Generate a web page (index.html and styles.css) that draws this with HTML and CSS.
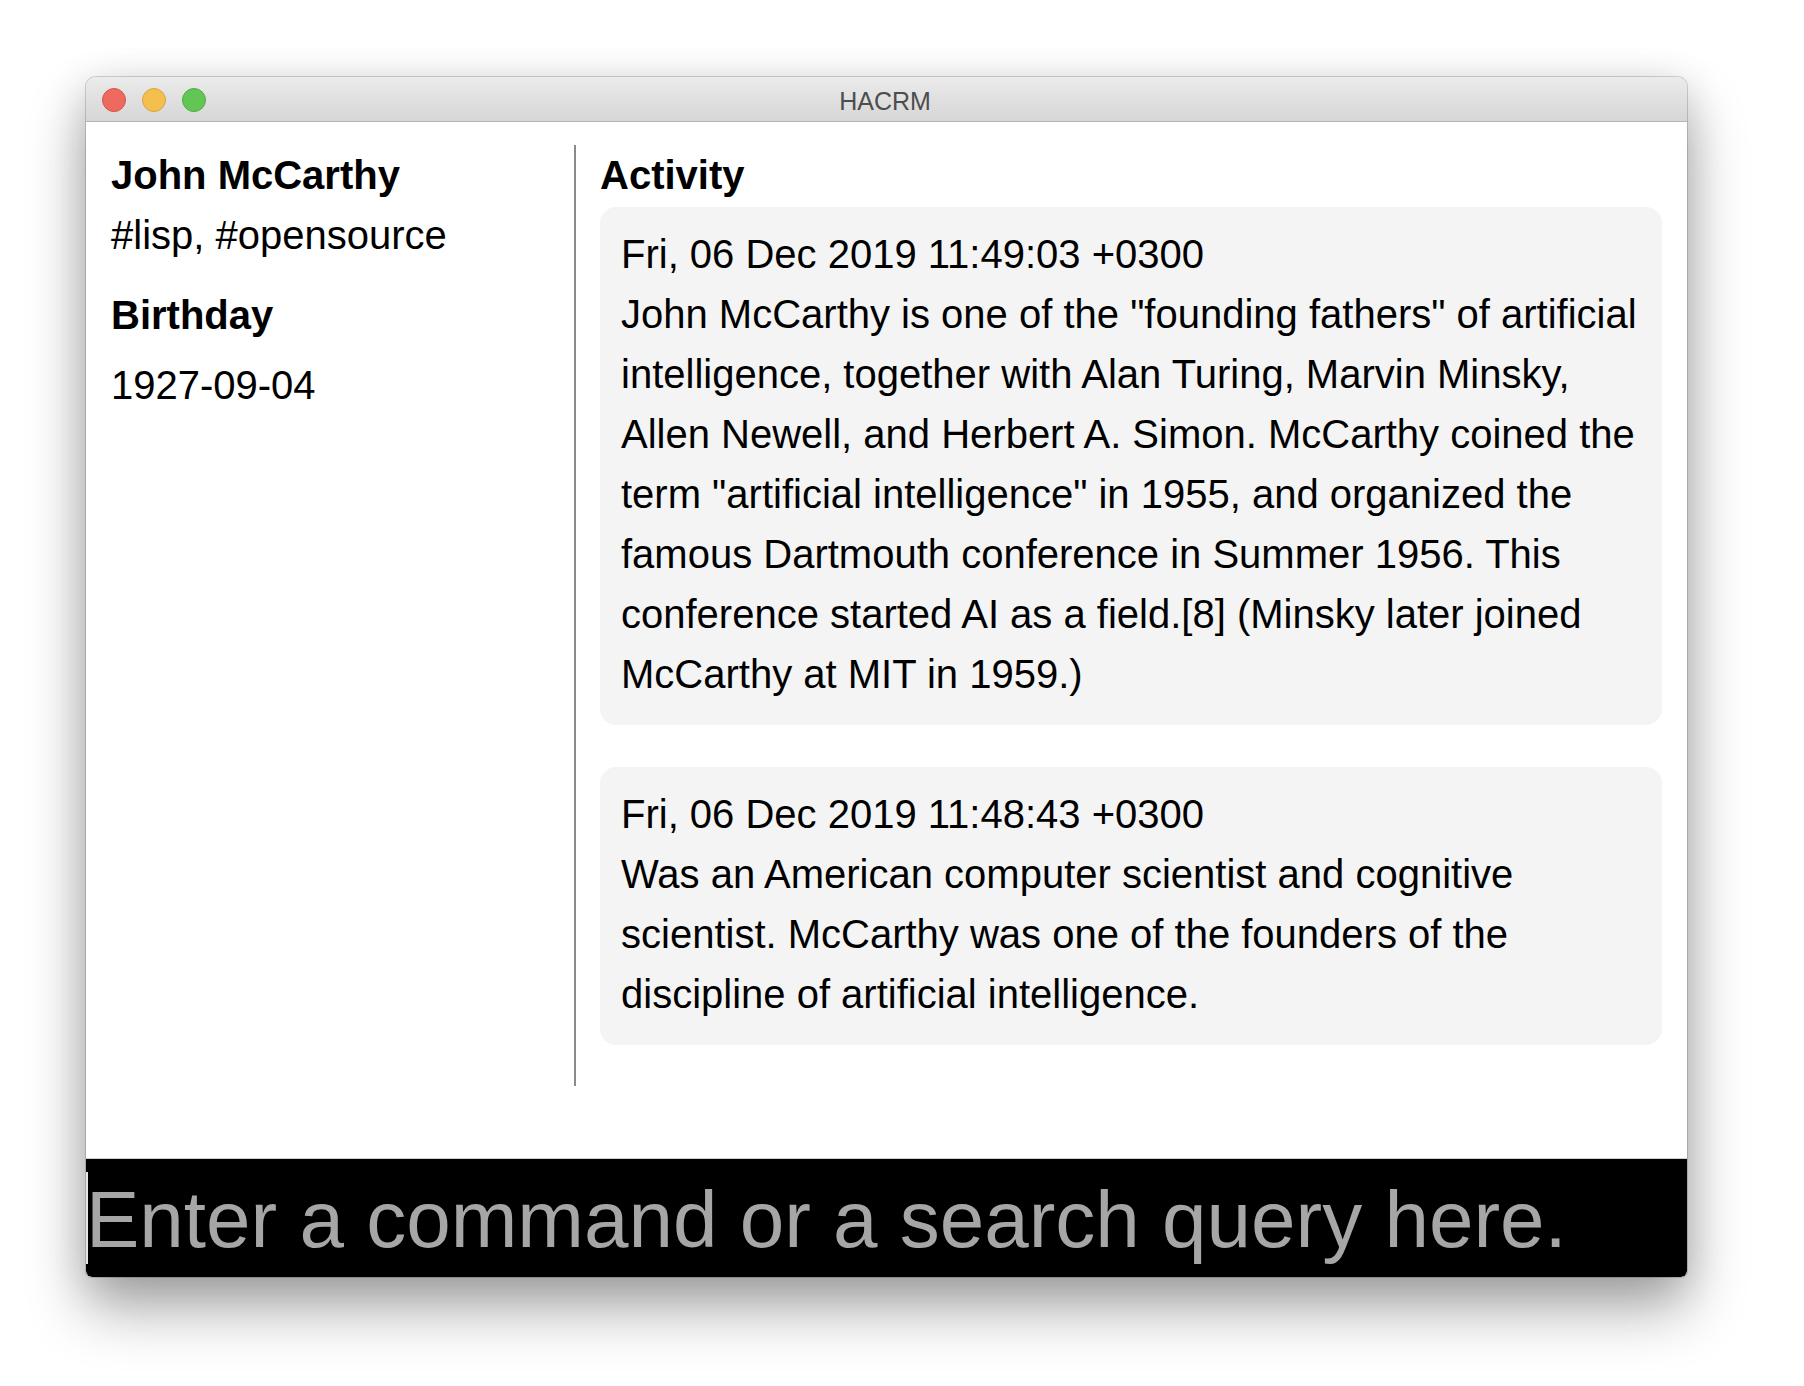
FILE: index.html
```html
<!DOCTYPE html>
<html lang="en">
<head>
<meta charset="utf-8">
<title>HACRM</title>
<link rel="stylesheet" href="styles.css">
</head>
<body>
<div class="window">
  <div class="titlebar">
    <div class="lights">
      <span class="light red"></span>
      <span class="light yellow"></span>
      <span class="light green"></span>
    </div>
    <div class="title">HACRM</div>
    <div class="spacer"></div>
  </div>
  <div class="main">
    <div class="sidebar">
      <h1 class="name">John McCarthy</h1>
      <div class="tags">#lisp, #opensource</div>
      <h3 class="label">Birthday</h3>
      <div class="value">1927-09-04</div>
    </div>
    <div class="activity">
      <h2 class="heading">Activity</h2>
      <div class="card">
        <div class="date">Fri, 06 Dec 2019 11:49:03 +0300</div>
        <div class="text">John McCarthy is one of the "founding fathers" of artificial intelligence, together with Alan Turing, Marvin Minsky, Allen Newell, and Herbert A. Simon. McCarthy coined the term "artificial intelligence" in 1955, and organized the famous Dartmouth conference in Summer 1956. This conference started AI as a field.[8] (Minsky later joined McCarthy at MIT in 1959.)</div>
      </div>
      <div class="card last">
        <div class="date">Fri, 06 Dec 2019 11:48:43 +0300</div>
        <div class="text">Was an American computer scientist and cognitive scientist. McCarthy was one of the founders of the discipline of artificial intelligence.</div>
      </div>
    </div>
  </div>
  <div class="command">
    <span class="caret"></span>
    <span class="placeholder">Enter a command or a search query here.</span>
  </div>
</div>
</body>
</html>
```
FILE: styles.css
```css
html, body {
  margin: 0;
  padding: 0;
  background: #ffffff;
}
body {
  font-family: "Liberation Sans", Arial, Helvetica, sans-serif;
  color: #000;
  padding-top: 77px;
  padding-left: 86px;
  height: 1386px;
  box-sizing: border-box;
  overflow: hidden;
}
.window {
  width: 1601px;
  height: 1200px;
  display: flex;
  flex-direction: column;
  background: #fff;
  border-radius: 10px 10px 6px 6px;
  overflow: hidden;
  box-shadow: 0 0 0 1px rgba(0,0,0,0.16), 0 32px 60px rgba(0,0,0,0.33), 0 8px 40px rgba(0,0,0,0.14);
}
.titlebar {
  height: 44px;
  flex: none;
  display: grid;
  grid-template-columns: 1fr auto 1fr;
  background: linear-gradient(#ebebeb, #d6d6d6);
  border-bottom: 1px solid #b3b3b3;
}
.lights {
  display: flex;
  align-items: center;
  gap: 16px;
  padding-left: 16px;
  padding-top: 2px;
}
.light {
  width: 22px;
  height: 22px;
  border-radius: 50%;
  border: 1px solid;
}
.red { background: #ee6a5f; border-color: #d1564b; }
.yellow { background: #f5bf4f; border-color: #d9a441; }
.green { background: #62c655; border-color: #53aa45; }
.title {
  font-size: 25px;
  line-height: 38px;
  padding-top: 5px;
  padding-right: 3px;
  color: #4d4d4d;
}
.main {
  flex: 1;
  display: flex;
  align-items: stretch;
  padding: 23px 25px 0 25px;
  min-height: 0;
}
.sidebar {
  width: 463px;
  flex: none;
  align-self: stretch;
  border-right: 2px solid #8a8a8a;
  font-size: 40px;
  line-height: 60px;
  height: 941px;
}
.name, .label, .heading {
  margin: 0;
  font-size: 40px;
  line-height: 60px;
  font-weight: bold;
}
.label { margin-top: 20px; }
.value { margin-top: 10px; }
.activity {
  flex: 1;
  align-self: stretch;
  padding-left: 24px;
  font-size: 40px;
  line-height: 60px;
}
.heading { margin-bottom: 2px; }
.card {
  background: #f4f4f4;
  border-radius: 16px;
  padding: 17px 16px 21px 21px;
  margin-bottom: 42px;
}
.card.last { margin-bottom: 41px; }
.command {
  height: 118px;
  flex: none;
  border-top: 1px solid #cfcfcf;
  background: #000;
  display: flex;
  align-items: center;
  border-radius: 0 0 6px 6px;
}
.caret {
  width: 2px;
  height: 92px;
  background: #e6e6e6;
  flex: none;
}
.placeholder {
  font-size: 80px;
  line-height: 110px;
  padding-top: 4px;
  margin-left: -2px;
  color: #a6a6a6;
  white-space: nowrap;
}
```
